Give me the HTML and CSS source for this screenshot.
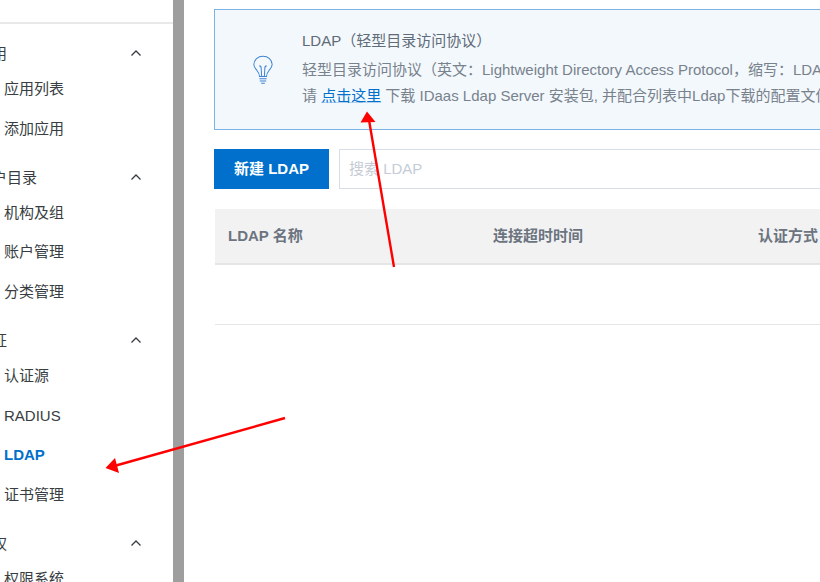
FILE: index.html
```html
<!DOCTYPE html>
<html lang="zh-CN">
<head>
    <meta charset="UTF-8">
    <title>LDAP</title>
    <link rel="stylesheet" href="styles.css">
</head>
<body>
    <div class="page">
        <aside class="sidebar">
            <div class="quick-link">快速入门</div>

            <div class="nav-group nav-first">
                <div class="nav-title"><span>应用</span><svg class="chevron" viewBox="0 0 10 6"><path d="M.5 5.500 5 1l4.500 4.500"/></svg></div>
                <div class="nav-item">应用列表</div>
                <div class="nav-item">添加应用</div>
            </div>
            <div class="nav-group">
                <div class="nav-title"><span>用户目录</span><svg class="chevron" viewBox="0 0 10 6"><path d="M.5 5.500 5 1l4.500 4.500"/></svg></div>
                <div class="nav-item">机构及组</div>
                <div class="nav-item">账户管理</div>
                <div class="nav-item">分类管理</div>
            </div>
            <div class="nav-group">
                <div class="nav-title"><span>认证</span><svg class="chevron" viewBox="0 0 10 6"><path d="M.5 5.500 5 1l4.500 4.500"/></svg></div>
                <div class="nav-item">认证源</div>
                <div class="nav-item">RADIUS</div>
                <div class="nav-item active">LDAP</div>
                <div class="nav-item">证书管理</div>
            </div>
            <div class="nav-group">
                <div class="nav-title"><span>授权</span><svg class="chevron" viewBox="0 0 10 6"><path d="M.5 5.500 5 1l4.500 4.500"/></svg></div>
                <div class="nav-item">权限系统</div>
            </div>
        </aside>
        <div class="splitter"></div>

        <main class="content">
            <section class="notice">
                <svg class="notice-icon" viewBox="0 0 24 32">
                    <path d="M8.200 23c0-3-1.200-4.500-3-6.800C3.600 14.200 2 12.500 2 10c0-5.200 4.500-9 10-9s10 3.800 10 9c0 2.500-1.600 4.200-3.200 6.200-1.800 2.300-3 3.800-3 6.800z"/>
                    <path d="M8 11.500c1.300 0 2 1 2 2.500l.5 9M16 11.500c-1.300 0-2 1-2 2.500l-.5 9M8 25.500h8M8.500 28h7M10 30.500h4"/>
                </svg>
                <div class="notice-text">
                    <h4 class="notice-title">LDAP（轻型目录访问协议）</h4>
                    <p>轻型目录访问协议（英文：Lightweight Directory Access Protocol，缩写：LDAP）是一个开放的，中立的，工业标准的应用协议</p>
                    <p>请 <a class="link">点击这里</a> 下载 IDaas Ldap Server 安装包, 并配合列表中Ldap下载的配置文件使用</p>
                </div>
            </section>

            <div class="toolbar">
                <button class="btn-primary">新建 LDAP</button>
                <input class="search" type="text" placeholder="搜索 LDAP">
            </div>

            <div class="table">
                <div class="table-head">
                    <div>LDAP 名称</div>
                    <div>连接超时时间</div>
                    <div>认证方式</div>
                </div>
                <div class="table-empty"></div>
            </div>
        </main>
    </div>

    <svg class="arrows" viewBox="0 0 820 582">
        <path d="M394 267 369 120"/>
        <polygon points="367,111.500 360.500,122.500 375.500,122"/>
        <path d="M285 418 116 465.500"/>
        <polygon points="105.500,468 119,473 115,458"/>
    </svg>
</body>
</html>
```

FILE: styles.css
```css
html, body {
    margin: 0;
    height: 582px;
    overflow: hidden;
}
body {
    font-family: "Liberation Sans", "Noto Sans CJK SC", sans-serif;
    font-size: 15px;
    color: #373d41;
    background: #fff;
}
.page {
    display: flex;
    height: 582px;
}
.sidebar {
    width: 173px;
    flex: none;
    overflow: hidden;
}
.quick-link {
    height: 40px;
    line-height: 15px;
    margin-top: -16px;
    margin-left: -23px;
    border-bottom: 2px solid #e9e9e9;
    box-sizing: border-box;
    width: 196px;
}
.nav-first {
    padding-top: 12px;
}
.nav-group {
    margin-bottom: 11.500px;
}
.nav-title {
    display: flex;
    align-items: center;
    justify-content: space-between;
    height: 33px;
    margin-left: -23px;
    padding-right: 32px;
}
.nav-title span {
    white-space: nowrap;
}
.chevron {
    width: 10px;
    height: 6px;
    margin-top: 1px;
    fill: none;
    stroke: #373d41;
    stroke-width: 1.300;
}
.nav-item {
    height: 39.600px;
    line-height: 39.600px;
    padding-left: 4px;
}
.nav-item.active {
    color: #0070cc;
    font-weight: bold;
}
.splitter {
    width: 11px;
    flex: none;
    background: #9e9e9e;
}
.content {
    width: 1000px;
    flex: none;
    padding: 9px 0 0 30px;
}
.notice {
    display: flex;
    align-items: center;
    height: 121px;
    box-sizing: border-box;
    border: 1px solid #7db2e4;
    background: #f3f8fc;
}
.notice-icon {
    width: 22px;
    height: 30px;
    margin-left: 37px;
    flex: none;
    fill: none;
    stroke: #3f84d4;
    stroke-width: 1.100;
}
.notice-text {
    margin-left: 28px;
    padding-bottom: 5px;
    white-space: nowrap;
}
.notice-title {
    margin: 0 0 1px;
    font-size: 15px;
    font-weight: normal;
    line-height: 31px;
    color: #5f6b78;
}
.notice-text p {
    margin: 0;
    line-height: 26px;
    color: #78828d;
}
.link {
    color: #0070cc;
    text-decoration: underline;
    text-decoration-color: #b5d3ee;
    text-decoration-thickness: 1px;
}
.toolbar {
    display: flex;
    gap: 10px;
    margin-top: 19px;
}
.btn-primary {
    width: 115px;
    height: 40px;
    border: none;
    padding: 0 0 3px;
    background: #0070cc;
    color: #fff;
    font: bold 15px "Liberation Sans", "Noto Sans CJK SC", sans-serif;
}
.search {
    width: 600px;
    height: 40px;
    box-sizing: border-box;
    border: 1px solid #d7dee8;
    padding: 0 9px 2px;
    font: 15px "Liberation Sans", "Noto Sans CJK SC", sans-serif;
}
.search::placeholder {
    color: #c5ccd6;
}
.table {
    margin: 20px 0 0 1px;
}
.table-head {
    display: grid;
    grid-template-columns: 265px 265px 265px;
    align-items: center;
    height: 56px;
    box-sizing: border-box;
    padding: 0 0 3px 13px;
    background: #f2f2f2;
    border-bottom: 2px solid #e5e5e5;
    color: #6b7480;
    font-weight: bold;
}
.table-empty {
    height: 60px;
    box-sizing: border-box;
    border-bottom: 1px solid #e5e5e5;
}
.arrows {
    position: absolute;
    left: 0;
    top: 0;
    width: 820px;
    height: 582px;
    pointer-events: none;
}
.arrows path {
    fill: none;
    stroke: #f00;
    stroke-width: 2.400;
}
.arrows polygon {
    fill: #f00;
}
```
